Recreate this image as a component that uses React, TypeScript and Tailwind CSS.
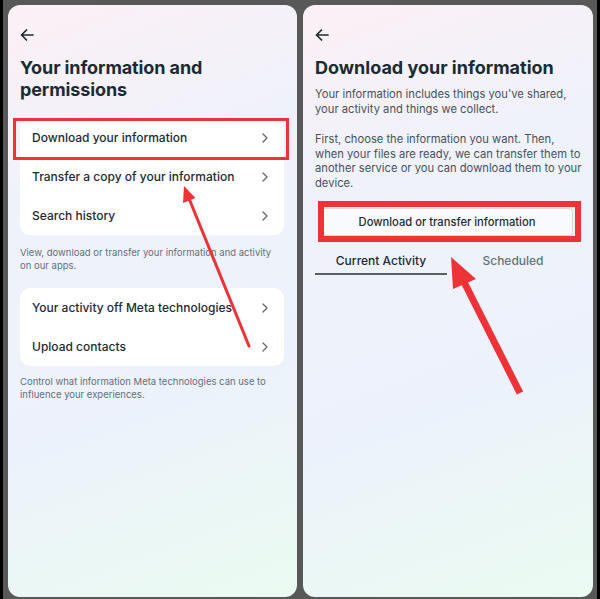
import React from "react";

const font = "font-['Inter','Noto_Sans',sans-serif]";

function BackArrow() {
  return (
    <svg width="14" height="14" viewBox="0 0 14 14" fill="none" stroke="#1c2b33" strokeWidth="1.7" strokeLinecap="round" strokeLinejoin="round">
      <path d="M13 7H1.5M6.5 2L1.5 7l5 5" />
    </svg>
  );
}

function Chevron() {
  return (
    <svg width="8" height="10" viewBox="0 0 8 10" fill="none" stroke="#65676b" strokeWidth="1.3" strokeLinecap="round" strokeLinejoin="round">
      <path d="M2 1l4 4-4 4" />
    </svg>
  );
}

function Row({ label }: { label: string }) {
  return (
    <div className="flex h-[39px] items-center justify-between pl-[12px] pr-[15px]">
      <span className="text-[12px] font-medium text-[#1c2b33]">{label}</span>
      <Chevron />
    </div>
  );
}

const panelBg =
  "bg-[linear-gradient(160deg,#fcf0f5_0%,#eff2fb_30%,#ecf2fb_65%,#ebfbf1_100%)]";

export default function App() {
  return (
    <div className={`relative flex h-[599px] w-[600px] gap-[6px] border-x-[3px] border-black bg-[#585858] pb-[2px] pl-[5px] pr-[4px] pt-[5px] ${font}`}>
      {/* Left panel */}
      <div className={`relative flex w-[289px] flex-col rounded-[12px] ${panelBg} pl-[12px] pr-[13px] pt-[23px]`}>
        <BackArrow />
        <h1 className="mt-[15px] text-[18px] font-bold leading-[22px] tracking-[-0.1px] text-[#1c2b33]">
          Your information and
          <br />
          permissions
        </h1>
        <div className="mt-[17px] rounded-[10px] bg-white">
          <Row label="Download your information" />
          <Row label="Transfer a copy of your information" />
          <Row label="Search history" />
        </div>
        <p className="mt-[11px] text-[9.5px] leading-[13px] text-[#65707a]">
          View, download or transfer your information and activity on our apps.
        </p>
        <div className="mt-[16px] rounded-[10px] bg-white">
          <Row label="Your activity off Meta technologies" />
          <Row label="Upload contacts" />
        </div>
        <p className="mt-[9px] text-[9.5px] leading-[13px] text-[#65707a]">
          Control what information Meta technologies can use to influence your experiences.
        </p>
        <div className="absolute left-[5px] top-[113px] h-[42px] w-[276px] border-[3px] border-[#ee3338]" />
      </div>

      {/* Right panel */}
      <div className={`relative flex w-[290px] flex-col rounded-[12px] ${panelBg} pl-[12px] pr-[14px] pt-[23px]`}>
        <BackArrow />
        <h1 className="mt-[15px] text-[18px] font-bold leading-[22px] text-[#1c2b33]">
          Download your information
        </h1>
        <p className="mt-[8px] w-[268px] text-[11.2px] leading-[14.5px] text-[#46525c]">
          Your information includes things you've shared, your activity and things we collect.
        </p>
        <p className="mt-[16px] w-[268px] text-[11.2px] leading-[14.5px] text-[#46525c]">
          First, choose the information you want. Then, when your files are ready, we can transfer them to another service or you can download them to your device.
        </p>
        <div className="mx-[6px] mt-[18px] flex h-[28px] items-center justify-center rounded-[4px] border border-[#d5dbe1] bg-white/60 text-[11.2px] font-medium text-[#1c2b33]">
          Download or transfer information
        </div>
        <div className="mt-[6px] flex">
          <div className="flex flex-1 justify-center border-b-2 border-[#5a5f66] pb-[4px] pt-[11px] text-[12px] font-medium leading-[16px] text-[#1c2b33]">
            Current Activity
          </div>
          <div className="flex flex-1 justify-center border-b-2 border-transparent pb-[4px] pt-[11px] text-[12px] font-medium leading-[16px] text-[#65737e]">
            Scheduled
          </div>
        </div>
        <div className="absolute left-[15px] top-[196px] h-[41px] w-[263px] border-[6px] border-[#ee3338]" />
      </div>

      {/* Annotation arrows */}
      <svg className="pointer-events-none absolute left-[-3px] top-0" width="600" height="599" viewBox="0 0 600 599">
        <line x1="249" y1="346" x2="188" y2="196" stroke="#ee3338" strokeWidth="3" strokeLinecap="round" />
        <polygon points="184,186 195.5,198 183,203" fill="#ee3338" />
        <line x1="520" y1="393" x2="463" y2="280" stroke="#ee3338" strokeWidth="7" strokeLinecap="butt" />
        <polygon points="451,257 476,279 453,289" fill="#ee3338" />
      </svg>
    </div>
  );
}
